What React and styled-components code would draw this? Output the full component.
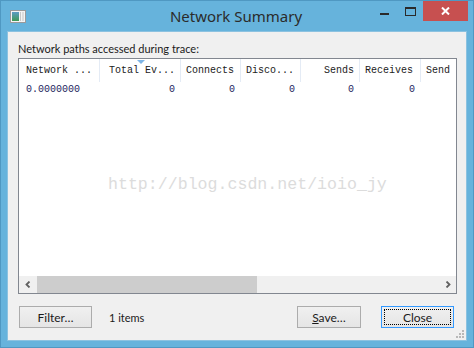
import React from "react";
import styled, { createGlobalStyle } from "styled-components";

const Global = createGlobalStyle`
  html, body { margin: 0; padding: 0; background: #66b3dc; }
  * { box-sizing: border-box; }
`;

const Window = styled.div`
  position: relative;
  width: 474px;
  height: 348px;
  border: 1px solid #4f98c2;
  background: #66b3dc;
  display: flex;
  flex-direction: column;
  font-family: "Segoe UI", "Noto Sans", "Liberation Sans", sans-serif;
  overflow: hidden;
`;

const TitleBar = styled.div`
  height: 30px;
  display: grid;
  grid-template-columns: 1fr auto 1fr;
  align-items: center;
`;

const AppIcon = styled.svg`
  margin-left: 9px;
`;

const Title = styled.div`
  font-size: 15px;
  color: #2b2b2b;
  padding-right: 2px;
`;

const Caption = styled.div`
  justify-self: end;
  align-self: start;
  display: flex;
  align-items: flex-start;
  height: 20px;
  margin-right: 5px;
`;

const CapBtn = styled.div`
  width: ${(p) => p.$w}px;
  height: 20px;
  display: flex;
  align-items: center;
  justify-content: center;
  background: ${(p) => (p.$close ? "#c75050" : "transparent")};
`;

const Client = styled.div`
  flex: 1;
  margin: 0 6px 6px 6px;
  border: 1px solid #8cc2e0;
  background: #f0f0f0;
  padding: 8px 9px 10px 10px;
  display: flex;
  flex-direction: column;
  position: relative;
  font-family: "Lato", "Segoe UI", "Liberation Sans", sans-serif;
`;

const Label = styled.div`
  font-size: 11px;
  color: #1a1a1a;
  height: 17px;
  line-height: 15px;
  margin-top: 1px;
`;

const ListBox = styled.div`
  height: 236px;
  border: 1px solid #828790;
  background: #fff;
  display: flex;
  flex-direction: column;
  overflow: hidden;
  font-family: "Liberation Mono", "DejaVu Sans Mono", monospace;
  font-size: 10px;
`;

const HeaderRow = styled.div`
  display: flex;
  height: 23px;
  flex: none;
`;

const HeadCell = styled.div`
  position: relative;
  flex: none;
  width: ${(p) => p.$w}px;
  border-right: 1px solid #e4ebf5;
  display: flex;
  align-items: center;
  justify-content: ${(p) => (p.$right ? "flex-end" : "flex-start")};
  padding: 0 ${(p) => (p.$right ? 5 : 0)}px 0 ${(p) => p.$pl}px;
  color: #1b1b1b;
  white-space: pre;
  overflow: hidden;
`;

const SortArrow = styled.div`
  position: absolute;
  top: 1px;
  left: 37px;
  width: 0;
  height: 0;
  border-left: 4px solid transparent;
  border-right: 4px solid transparent;
  border-top: 4px solid #7fb5e6;
`;

const Body = styled.div`
  flex: 1;
`;

const Row = styled.div`
  display: flex;
  height: 15px;
  align-items: center;
`;

const Cell = styled.div`
  flex: none;
  width: ${(p) => p.$w}px;
  text-align: ${(p) => (p.$right ? "right" : "left")};
  padding: 0 ${(p) => (p.$right ? 6 : 0)}px 0 ${(p) => p.$pl || 0}px;
  color: #1c2560;
  white-space: pre;
`;

const HScroll = styled.div`
  height: 17px;
  flex: none;
  display: flex;
  background: #f0f0f0;
`;

const ArrowBtn = styled.div`
  width: 17px;
  flex: none;
  display: flex;
  align-items: center;
  justify-content: center;
`;

const Track = styled.div`
  flex: 1;
  display: flex;
  align-items: stretch;
  padding: 0 1px;
`;

const Thumb = styled.div`
  width: 220px;
  background: #cdcdcd;
`;

const Footer = styled.div`
  margin-top: 12px;
  display: flex;
  align-items: center;
  padding: 0 3px 0 1px;
`;

const Button = styled.div`
  width: ${(p) => p.$w}px;
  height: 22px;
  border: 1px solid ${(p) => (p.$focus ? "#3399ff" : "#acacac")};
  background: linear-gradient(#f0f0f0, #e5e5e5);
  display: flex;
  align-items: center;
  justify-content: center;
  font-size: 12px;
  color: #1a1a1a;
  padding: 2px;
  margin-left: ${(p) => p.$ml || 0}px;
`;

const FocusRing = styled.div`
  width: 100%;
  height: 100%;
  border: 1px dotted #000;
  display: flex;
  align-items: center;
  justify-content: center;
`;

const Count = styled.div`
  font-size: 11px;
  color: #1a1a1a;
  margin-left: 17px;
  flex: 1;
`;

const Grip = styled.svg`
  position: absolute;
  right: 2px;
  bottom: 2px;
`;

const Watermark = styled.div`
  position: absolute;
  left: 107px;
  top: 174px;
  font-family: "Liberation Mono", "DejaVu Sans Mono", monospace;
  font-size: 16.6px;
  color: #dcdcdc;
  white-space: pre;
  pointer-events: none;
`;

const cols = [
  { w: 81, label: "Network ...", pl: 7, v: "0.0000000" },
  { w: 81, label: "Total Ev...", pl: 9, v: "0", r: true, sort: true },
  { w: 60, label: "Connects", pl: 5, v: "0", r: true },
  { w: 60, label: "Disco...", pl: 5, v: "0", r: true },
  { w: 59, label: "Sends", pl: 0, hr: true, v: "0", r: true },
  { w: 61, label: "Receives", pl: 5, v: "0", r: true },
  { w: 80, label: "Send", pl: 5, v: "" },
];

export default function App() {
  return (
    <>
      <Global />
      <Window>
        <TitleBar>
          <AppIcon width="16" height="13" viewBox="0 0 16 13">
            <rect x="0.5" y="0.5" width="15" height="12" fill="#f4f4f4" stroke="#9a9a9a" />
            <defs>
              <linearGradient id="ig" x1="0" y1="0" x2="0" y2="1">
                <stop offset="0" stopColor="#5d9cc4" />
                <stop offset="1" stopColor="#3f9a56" />
              </linearGradient>
            </defs>
            <rect x="2" y="2" width="7" height="9" fill="url(#ig)" />
            <rect x="10" y="2" width="1" height="9" fill="#c8c8c8" />
            <rect x="12" y="2" width="2" height="9" fill="#dcdcdc" />
          </AppIcon>
          <Title>Network Summary</Title>
          <Caption>
            <CapBtn $w={26}>
              <svg width="9" height="2" viewBox="0 0 9 2" style={{ marginTop: 5 }}>
                <rect width="9" height="2" fill="#2a2a2a" />
              </svg>
            </CapBtn>
            <CapBtn $w={26}>
              <svg width="11" height="9" viewBox="0 0 11 9">
                <rect x="0.5" y="0.5" width="10" height="8" fill="none" stroke="#2a2a2a" />
                <rect x="0" y="0" width="11" height="2" fill="#2a2a2a" />
              </svg>
            </CapBtn>
            <CapBtn $w={45} $close>
              <svg width="9" height="8" viewBox="0 0 9 8">
                <path d="M1 0.5 L8 7.5 M8 0.5 L1 7.5" stroke="#fff" strokeWidth="2" />
              </svg>
            </CapBtn>
          </Caption>
        </TitleBar>
        <Client>
          <Label>Network paths accessed during trace:</Label>
          <ListBox>
            <HeaderRow>
              {cols.map((c, i) => (
                <HeadCell key={i} $w={c.w} $pl={c.pl} $right={c.hr}>
                  {c.sort && <SortArrow />}
                  {c.label}
                </HeadCell>
              ))}
            </HeaderRow>
            <Body>
              <Row>
                {cols.map((c, i) => (
                  <Cell key={i} $w={c.w} $right={c.r} $pl={i === 0 ? 7 : 0}>
                    {c.v}
                  </Cell>
                ))}
              </Row>
            </Body>
            <HScroll>
              <ArrowBtn>
                <svg width="6" height="7" viewBox="0 0 6 7">
                  <path d="M4.5 0.5 L1.5 3.5 L4.5 6.5" fill="none" stroke="#606060" strokeWidth="1.8" />
                </svg>
              </ArrowBtn>
              <Track>
                <Thumb />
              </Track>
              <ArrowBtn>
                <svg width="6" height="7" viewBox="0 0 6 7">
                  <path d="M1.5 0.5 L4.5 3.5 L1.5 6.5" fill="none" stroke="#606060" strokeWidth="1.8" />
                </svg>
              </ArrowBtn>
            </HScroll>
          </ListBox>
          <Footer>
            <Button $w={73}>Filter…</Button>
            <Count>1 items</Count>
            <Button $w={64}>
              <span>
                <u>S</u>ave…
              </span>
            </Button>
            <Button $w={73} $ml={20} $focus>
              <FocusRing>Close</FocusRing>
            </Button>
          </Footer>
          <Grip width="9" height="9" viewBox="0 0 9 9">
            {[
              [7, 1],
              [7, 4],
              [4, 4],
              [7, 7],
              [4, 7],
              [1, 7],
            ].map(([x, y], i) => (
              <rect key={i} x={x} y={y} width="2" height="2" fill="#b8b8b8" />
            ))}
          </Grip>
        </Client>
        <Watermark>http://blog.csdn.net/ioio_jy</Watermark>
      </Window>
    </>
  );
}
